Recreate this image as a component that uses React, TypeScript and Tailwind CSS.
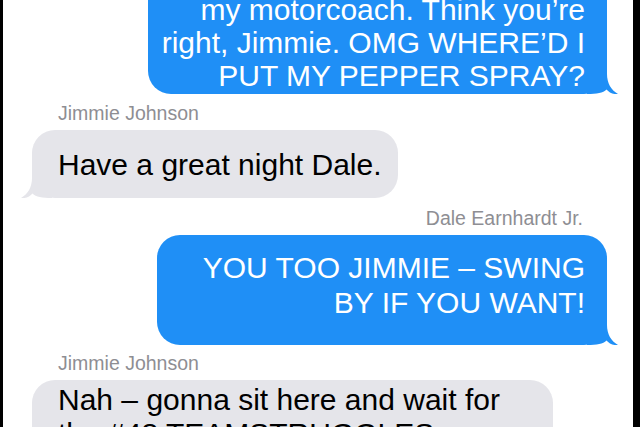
import React from "react";

const BLUE = "#1f8ff6";
const GRAY = "#e5e5ea";

function Tail({ side, color }: { side: "left" | "right"; color: string }) {
  if (side === "right") {
    return (
      <svg
        width="31"
        height="30"
        viewBox="0 0 31 30"
        className="absolute bottom-0 right-[-11px]"
        fill={color}
      >
        <path d="M0 0H20V10C20 19 24 26 31 30C26 30.6 22 28.5 19.5 25.5C16 29 10 30 0 30Z" />
      </svg>
    );
  }
  return (
    <svg
      width="31"
      height="30"
      viewBox="0 0 31 30"
      className="absolute bottom-0 left-[-11px]"
      fill={color}
    >
      <path d="M31 0H11V10C11 19 7 26 0 30C5 30.6 9 28.5 11.5 25.5C15 29 21 30 31 30Z" />
    </svg>
  );
}

export default function App() {
  return (
    <div
      className="flex h-[427px] w-[640px] overflow-hidden bg-black"
      style={{ fontFamily: '"Liberation Sans", Arial, sans-serif' }}
    >
      <div className="w-[3px] shrink-0" />
      <div className="flex min-w-0 flex-1 flex-col bg-white">
        {/* Bubble 1 (outgoing, cut off at top) */}
        <div className="relative mr-[26px] mt-[-30px] w-[459px] shrink-0 self-end rounded-[23px] bg-[#1f8ff6] pb-[2px] pr-[22px] pt-[23px] text-right text-[30px] leading-[33px] whitespace-nowrap text-white">
          my motorcoach. Think you’re
          <br />
          right, Jimmie. OMG WHERE’D I
          <br />
          PUT MY PEPPER SPRAY?
          <Tail side="right" color={BLUE} />
        </div>

        <div className="ml-[55px] mt-[7px] shrink-0 text-[19.5px] leading-[24px] text-[#8e8e93]">
          Jimmie Johnson
        </div>

        <div className="relative ml-[29px] mt-[5px] w-[366px] shrink-0 rounded-[23px] bg-[#e5e5ea] pb-[16px] pl-[26px] pt-[18px] text-[30px] leading-[34px] whitespace-nowrap text-black">
          Have a great night Dale.
          <Tail side="left" color={GRAY} />
        </div>

        <div className="mr-[50px] mt-[8px] shrink-0 self-end text-[19.5px] leading-[24px] text-[#8e8e93]">
          Dale Earnhardt Jr.
        </div>

        <div className="relative mr-[26px] mt-[5px] w-[450px] shrink-0 self-end rounded-[23px] bg-[#1f8ff6] pb-[25px] pr-[22px] pt-[15px] text-right text-[30px] leading-[35px] whitespace-nowrap text-white">
          YOU TOO JIMMIE – SWING
          <br />
          BY IF YOU WANT!
          <Tail side="right" color={BLUE} />
        </div>

        <div className="ml-[55px] mt-[6px] shrink-0 text-[19.5px] leading-[24px] text-[#8e8e93]">
          Jimmie Johnson
        </div>

        <div className="relative ml-[29px] mt-[5px] w-[521px] shrink-0 rounded-[23px] bg-[#e5e5ea] pb-[16px] pl-[26px] pt-[3px] text-[30px] leading-[34px] whitespace-nowrap text-black">
          Nah – gonna sit here and wait for
          <br />
          the #48 TEAMSTRUGGLES
          <br />
          to pass by.
        </div>
      </div>
      <div className="w-[7px] shrink-0" />
    </div>
  );
}
